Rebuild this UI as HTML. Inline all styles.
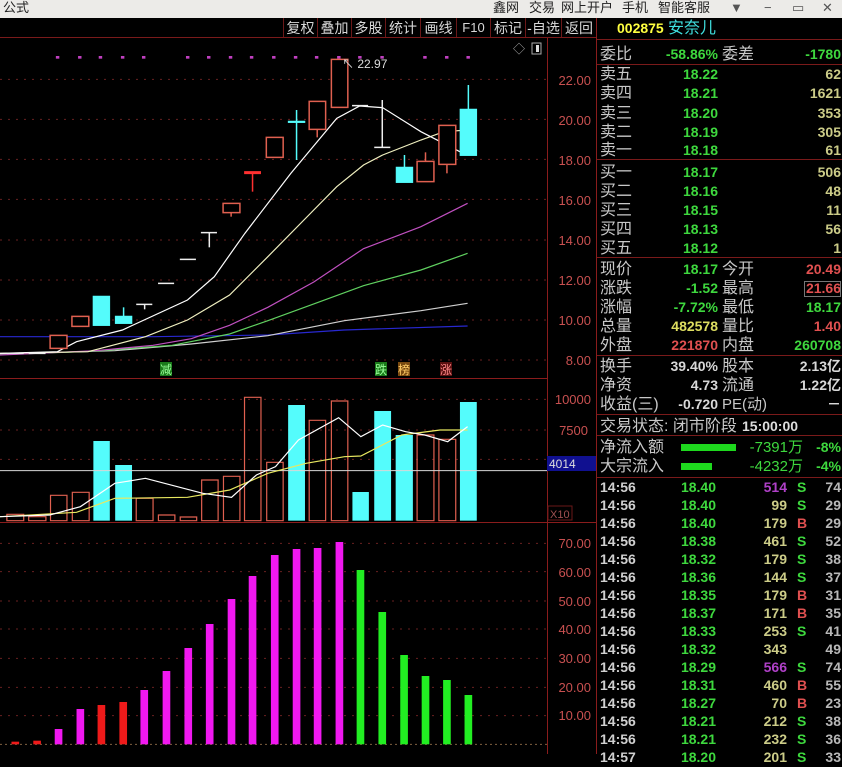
<!DOCTYPE html>
<html><head><meta charset="utf-8">
<style>
*{margin:0;padding:0;box-sizing:border-box}
body{width:842px;height:754px;background:#000;overflow:hidden;position:relative;font-family:"Liberation Sans","Noto Sans CJK SC",sans-serif;}
#title{position:absolute;left:0;top:0;width:842px;height:18px;background:#ecebe8;color:#222;font-size:13px;line-height:16px}
#title span{position:absolute;top:0}
.tb{position:absolute;top:18px;height:20px;line-height:20px;color:#d8d8d8;font-size:14px;text-align:center;border-left:1px solid #6a1818}
#rp{position:absolute;left:596px;top:18px;width:246px;height:736px;border-left:1px solid #8a1c1c}
.r{position:absolute;left:0;width:246px;height:19px;line-height:19px;font-size:14px;white-space:nowrap}
.r span{position:absolute;top:0}
.l1{left:3px;color:#c8c8c8;font-size:16px}
.l2{left:125px;color:#c8c8c8;font-size:16px}
.v1{left:0;width:121px;text-align:right;font-weight:bold}
.v2{left:0;width:244px;text-align:right;font-weight:bold}
.g{color:#3ed83e}.y{color:#cccc88}.rd{color:#e05050}.w{color:#d8d8d8}.yy{color:#dede60}.pu{color:#b040c8}
.sep{position:absolute;left:0;width:246px;height:1px;background:#7a1a1a}
.t{left:3px;color:#d0d0d0;font-weight:bold}
.p{left:0;width:119px;text-align:right;font-weight:bold;color:#3ed83e}
.q{left:0;width:190px;text-align:right;font-weight:bold}
.bs{left:200px;font-weight:bold}
.n{left:0;width:244px;text-align:right;color:#b8b8b8;font-weight:bold}
</style></head><body>
<div id="title">
<span style="left:3px">公式</span>
<span style="left:493px">鑫网</span><span style="left:529px">交易</span><span style="left:561px">网上开户</span><span style="left:622px">手机</span><span style="left:658px">智能客服</span>
<span style="left:730px;font-weight:bold;color:#555">▼</span><span style="left:764px;color:#555">−</span><span style="left:792px;color:#555">▭</span><span style="left:822px;color:#555">✕</span>
</div>
<div class="tb" style="left:283px;width:34px">复权</div>
<div class="tb" style="left:317px;width:34px">叠加</div>
<div class="tb" style="left:351px;width:34px">多股</div>
<div class="tb" style="left:385px;width:35px">统计</div>
<div class="tb" style="left:420px;width:36px">画线</div>
<div class="tb" style="left:456px;width:34px;font-size:13px">F10</div>
<div class="tb" style="left:490px;width:35px">标记</div>
<div class="tb" style="left:525px;width:36px">-自选</div>
<div class="tb" style="left:561px;width:35px">返回</div>

<svg style="position:absolute;left:0;top:0" width="596" height="754">
<line x1="0" y1="37.5" x2="596" y2="37.5" stroke="#7a1a1a"/>
<line x1="547.5" y1="38" x2="547.5" y2="754" stroke="#8a1c1c"/>
<line x1="0" y1="378.5" x2="547" y2="378.5" stroke="#8a1c1c"/>
<line x1="0" y1="522.5" x2="596" y2="522.5" stroke="#8a1c1c"/>
<text x="513" y="53" fill="#aaa" font-size="12">◇</text>
<rect x="532" y="43" width="9" height="11" fill="none" stroke="#aaa"/><rect x="536" y="45" width="3" height="7" fill="#ddd"/>
<g transform="translate(0,40) scale(0.38265,0.33333)">
<g stroke="#6a2020" stroke-dasharray="2,6" vector-effect="non-scaling-stroke">
<line x1="0" y1="118" x2="1430" y2="118" vector-effect="non-scaling-stroke"/><line x1="0" y1="238" x2="1430" y2="238" vector-effect="non-scaling-stroke"/><line x1="0" y1="358" x2="1430" y2="358" vector-effect="non-scaling-stroke"/><line x1="0" y1="478" x2="1430" y2="478" vector-effect="non-scaling-stroke"/><line x1="0" y1="600" x2="1430" y2="600" vector-effect="non-scaling-stroke"/><line x1="0" y1="720" x2="1430" y2="720" vector-effect="non-scaling-stroke"/><line x1="0" y1="840" x2="1430" y2="840" vector-effect="non-scaling-stroke"/><line x1="0" y1="960" x2="1430" y2="960" vector-effect="non-scaling-stroke"/>
</g>
<g fill="#c040c0">
<rect x="146" y="48" width="9" height="8"/><rect x="204" y="48" width="9" height="8"/><rect x="258" y="48" width="9" height="8"/><rect x="316" y="48" width="9" height="8"/><rect x="371" y="48" width="9" height="8"/><rect x="486" y="48" width="9" height="8"/><rect x="541" y="48" width="9" height="8"/><rect x="598" y="48" width="9" height="8"/><rect x="653" y="48" width="9" height="8"/><rect x="711" y="48" width="9" height="8"/><rect x="768" y="48" width="9" height="8"/><rect x="823" y="48" width="9" height="8"/><rect x="881" y="48" width="9" height="8"/><rect x="936" y="48" width="9" height="8"/><rect x="994" y="48" width="9" height="8"/><rect x="1106" y="48" width="9" height="8"/><rect x="1163" y="48" width="9" height="8"/><rect x="1219" y="48" width="9" height="8"/>
</g>
<g fill="none" stroke-width="1.2">
<polyline vector-effect="non-scaling-stroke" stroke="#2828d0" points="0,890 400,890 700,885 900,870 1222,858"/>
<polyline vector-effect="non-scaling-stroke" stroke="#d0d0d0" points="0,942 300,932 500,912 700,887 900,842 1100,812 1222,790"/>
<polyline vector-effect="non-scaling-stroke" stroke="#60d060" points="0,944 240,934 450,916 600,882 700,842 820,792 950,737 1100,690 1222,640"/>
<polyline vector-effect="non-scaling-stroke" stroke="#c050c0" points="0,945 250,932 400,916 500,896 600,856 700,802 820,726 950,626 1100,560 1222,490"/>
<polyline vector-effect="non-scaling-stroke" stroke="#f0f0c0" points="0,940 230,935 380,890 490,840 600,765 700,650 820,510 880,440 950,375 1000,345 1100,300 1160,275 1222,270"/>
<polyline vector-effect="non-scaling-stroke" stroke="#ffffff" points="0,940 150,935 200,905 320,870 490,780 560,710 640,580 760,400 880,235 940,198 1000,203 1100,275 1210,340"/>
</g>
<g stroke="#e06050" fill="#000" stroke-width="1.5">
<rect vector-effect="non-scaling-stroke" x="131" y="886" width="44" height="39"/>
<rect vector-effect="non-scaling-stroke" x="188" y="829" width="44" height="30"/>
<line vector-effect="non-scaling-stroke" x1="604" y1="518" x2="604" y2="530"/><rect vector-effect="non-scaling-stroke" x="583" y="490" width="44" height="28"/>
<rect vector-effect="non-scaling-stroke" x="696" y="292" width="44" height="60"/>
<line vector-effect="non-scaling-stroke" x1="829" y1="268" x2="829" y2="292"/><rect vector-effect="non-scaling-stroke" x="808" y="184" width="43" height="84"/>
<rect vector-effect="non-scaling-stroke" x="866" y="58" width="43" height="144"/>
<line vector-effect="non-scaling-stroke" x1="1112" y1="337" x2="1112" y2="364"/><rect vector-effect="non-scaling-stroke" x="1090" y="364" width="44" height="61"/>
<line vector-effect="non-scaling-stroke" x1="1168" y1="373" x2="1168" y2="400"/><rect vector-effect="non-scaling-stroke" x="1147" y="256" width="44" height="117"/>
</g>
<g stroke="#ff3030" stroke-width="1.5"><line vector-effect="non-scaling-stroke" x1="638" y1="398" x2="682" y2="398" stroke-width="3"/><line vector-effect="non-scaling-stroke" x1="660" y1="398" x2="660" y2="455"/></g>
<g stroke="#eeeeee" stroke-width="1.5">
<line vector-effect="non-scaling-stroke" x1="18" y1="940" x2="62" y2="940"/><line vector-effect="non-scaling-stroke" x1="75" y1="940" x2="119" y2="940"/>
<line vector-effect="non-scaling-stroke" x1="356" y1="793" x2="398" y2="793"/><line vector-effect="non-scaling-stroke" x1="378" y1="793" x2="378" y2="808"/>
<line vector-effect="non-scaling-stroke" x1="413" y1="730" x2="455" y2="730"/>
<line vector-effect="non-scaling-stroke" x1="470" y1="658" x2="512" y2="658"/>
<line vector-effect="non-scaling-stroke" x1="525" y1="578" x2="567" y2="578"/><line vector-effect="non-scaling-stroke" x1="547" y1="578" x2="547" y2="622"/>
<line vector-effect="non-scaling-stroke" x1="920" y1="197" x2="962" y2="197"/>
<line vector-effect="non-scaling-stroke" x1="999" y1="180" x2="999" y2="322"/><line vector-effect="non-scaling-stroke" x1="978" y1="322" x2="1020" y2="322"/>
</g>
<g fill="#54fcfc" stroke="#54fcfc" stroke-width="1.5">
<rect x="243" y="768" width="44" height="89"/>
<line vector-effect="non-scaling-stroke" x1="323" y1="802" x2="323" y2="828"/><rect x="301" y="828" width="44" height="23"/>
<line vector-effect="non-scaling-stroke" x1="775" y1="210" x2="775" y2="360"/><rect x="753" y="243" width="44" height="5"/>
<line vector-effect="non-scaling-stroke" x1="1057" y1="345" x2="1057" y2="381"/><rect x="1035" y="381" width="44" height="47"/>
<line vector-effect="non-scaling-stroke" x1="1224" y1="135" x2="1224" y2="207"/><rect x="1202" y="207" width="44" height="140"/>
</g>
</g>
<g fill="#c85050" font-size="13" text-anchor="end">
<text x="591" y="85">22.00</text><text x="591" y="125">20.00</text><text x="591" y="165">18.00</text><text x="591" y="205">16.00</text><text x="591" y="245">14.00</text><text x="591" y="285">12.00</text><text x="591" y="325">10.00</text><text x="591" y="365">8.00</text>
</g>
<text x="342" y="68" fill="#ddd" font-size="12">↖ 22.97</text>
<rect x="160" y="362" width="12" height="14" fill="#1a7a1a"/><text x="160" y="374" fill="#9f9" font-size="12">减</text>
<rect x="375" y="362" width="12" height="14" fill="#1a7a1a"/><text x="375" y="374" fill="#9f9" font-size="12">跌</text>
<rect x="398" y="362" width="12" height="14" fill="#7a4a10"/><text x="398" y="374" fill="#fc6" font-size="12">榜</text>
<rect x="440" y="362" width="12" height="14" fill="#5a1010"/><text x="440" y="374" fill="#f88" font-size="12">涨</text>

<g transform="translate(0,380) scale(0.38265,0.33333)">
<g stroke="#6a2020" stroke-dasharray="2,6"><line vector-effect="non-scaling-stroke" x1="0" y1="58" x2="1430" y2="58"/><line vector-effect="non-scaling-stroke" x1="0" y1="150" x2="1430" y2="150"/><line vector-effect="non-scaling-stroke" x1="0" y1="238" x2="1430" y2="238"/></g>
<g fill="none" stroke="#e06050" stroke-width="1.2">
<rect vector-effect="non-scaling-stroke" x="18" y="403" width="44" height="19"/><rect vector-effect="non-scaling-stroke" x="75" y="410" width="45" height="12"/><rect vector-effect="non-scaling-stroke" x="132" y="346" width="43" height="76"/><rect vector-effect="non-scaling-stroke" x="189" y="337" width="44" height="85"/><rect vector-effect="non-scaling-stroke" x="356" y="355" width="44" height="67"/><rect vector-effect="non-scaling-stroke" x="414" y="405" width="43" height="17"/><rect vector-effect="non-scaling-stroke" x="471" y="411" width="43" height="11"/><rect vector-effect="non-scaling-stroke" x="527" y="300" width="43" height="122"/><rect vector-effect="non-scaling-stroke" x="584" y="289" width="43" height="133"/><rect vector-effect="non-scaling-stroke" x="639" y="52" width="43" height="370"/><rect vector-effect="non-scaling-stroke" x="697" y="247" width="43" height="175"/><rect vector-effect="non-scaling-stroke" x="808" y="121" width="43" height="301"/><rect vector-effect="non-scaling-stroke" x="866" y="63" width="43" height="359"/><rect vector-effect="non-scaling-stroke" x="1090" y="165" width="44" height="257"/><rect vector-effect="non-scaling-stroke" x="1147" y="178" width="44" height="244"/>
</g>
<g fill="#54fcfc"><rect x="244" y="183" width="43" height="239"/><rect x="301" y="255" width="44" height="167"/><rect x="753" y="75" width="44" height="347"/><rect x="921" y="336" width="43" height="86"/><rect x="978" y="93" width="44" height="329"/><rect x="1034" y="165" width="45" height="257"/><rect x="1202" y="66" width="44" height="356"/></g>
<line vector-effect="non-scaling-stroke" x1="0" y1="272" x2="1430" y2="272" stroke="#d8d8d8"/>
<g fill="none" stroke-width="1.2">
<polyline vector-effect="non-scaling-stroke" stroke="#e8e860" points="0,410 200,397 300,355 490,352 600,330 700,280 800,250 900,230 943,228 1050,165 1150,150 1222,150"/>
<polyline vector-effect="non-scaling-stroke" stroke="#fff" points="0,410 130,405 210,380 300,310 380,295 530,340 605,352 670,285 720,260 780,180 885,113 943,170 1000,135 1060,155 1110,165 1170,185 1222,140"/>
</g>
</g>
<rect x="547" y="456" width="49" height="15" fill="#101090"/>
<text x="549" y="468" fill="#ddd" font-size="12">4014</text>
<g fill="#c85050" font-size="13" text-anchor="end"><text x="591" y="404">10000</text><text x="588" y="435">7500</text></g>
<rect x="548" y="506" width="24" height="14" fill="none" stroke="#6a1818"/>
<text x="550" y="518" fill="#a05050" font-size="11">X10</text>

<g transform="translate(0,525) scale(0.38265,0.33333)">
<g stroke="#6a2020" stroke-dasharray="2,6"><line vector-effect="non-scaling-stroke" x1="0" y1="55" x2="1430" y2="55"/><line vector-effect="non-scaling-stroke" x1="0" y1="140" x2="1430" y2="140"/><line vector-effect="non-scaling-stroke" x1="0" y1="228" x2="1430" y2="228"/><line vector-effect="non-scaling-stroke" x1="0" y1="312" x2="1430" y2="312"/><line vector-effect="non-scaling-stroke" x1="0" y1="400" x2="1430" y2="400"/><line vector-effect="non-scaling-stroke" x1="0" y1="487" x2="1430" y2="487"/><line vector-effect="non-scaling-stroke" x1="0" y1="572" x2="1430" y2="572"/></g>
<line vector-effect="non-scaling-stroke" x1="0" y1="658" x2="1430" y2="658" stroke="#806040" stroke-dasharray="2,3"/>
<g fill="#ee1a1a"><rect x="30" y="650" width="20" height="8"/><rect x="87" y="647" width="20" height="11"/><rect x="255" y="540" width="20" height="118"/><rect x="312" y="531" width="20" height="127"/></g>
<g fill="#f018f0"><rect x="143" y="612" width="20" height="46"/><rect x="200" y="552" width="20" height="106"/><rect x="367" y="495" width="20" height="163"/><rect x="425" y="438" width="20" height="220"/><rect x="482" y="369" width="20" height="289"/><rect x="538" y="297" width="20" height="361"/><rect x="595" y="222" width="20" height="436"/><rect x="650" y="153" width="20" height="505"/><rect x="708" y="90" width="20" height="568"/><rect x="765" y="72" width="20" height="586"/><rect x="820" y="69" width="20" height="589"/><rect x="877" y="51" width="20" height="607"/></g>
<g fill="#22ee22"><rect x="932" y="135" width="20" height="523"/><rect x="989" y="261" width="20" height="397"/><rect x="1046" y="390" width="20" height="268"/><rect x="1102" y="453" width="20" height="205"/><rect x="1158" y="465" width="20" height="193"/><rect x="1214" y="510" width="20" height="148"/></g>
</g>
<g fill="#c85050" font-size="13" text-anchor="end"><text x="591" y="548">70.00</text><text x="591" y="577">60.00</text><text x="591" y="606">50.00</text><text x="591" y="634">40.00</text><text x="591" y="663">30.00</text><text x="591" y="692">20.00</text><text x="591" y="720">10.00</text></g>
</svg>

<div id="rp">
<div class="r" style="top:1px"><span style="left:20px;color:#ffff40;font-weight:bold;font-size:14px">002875</span><span style="left:71px;color:#40e0e0;font-size:16px">安奈儿</span></div>
<div class="sep" style="top:21px"></div>
<div class="r" style="top:27px"><span class="l1">委比</span><span class="v1 g">-58.86%</span><span class="l2">委差</span><span class="v2 g">-1780</span></div>
<div class="sep" style="top:46px"></div>
<div class="r" style="top:47px"><span class="l1">卖五</span><span class="v1 g">18.22</span><span class="v2 y">62</span></div>
<div class="r" style="top:66px"><span class="l1">卖四</span><span class="v1 g">18.21</span><span class="v2 y">1621</span></div>
<div class="r" style="top:86px"><span class="l1">卖三</span><span class="v1 g">18.20</span><span class="v2 y">353</span></div>
<div class="r" style="top:105px"><span class="l1">卖二</span><span class="v1 g">18.19</span><span class="v2 y">305</span></div>
<div class="r" style="top:123px"><span class="l1">卖一</span><span class="v1 g">18.18</span><span class="v2 y">61</span></div>
<div class="sep" style="top:141px"></div>
<div class="r" style="top:145px"><span class="l1">买一</span><span class="v1 g">18.17</span><span class="v2 y">506</span></div>
<div class="r" style="top:164px"><span class="l1">买二</span><span class="v1 g">18.16</span><span class="v2 y">48</span></div>
<div class="r" style="top:183px"><span class="l1">买三</span><span class="v1 g">18.15</span><span class="v2 y">11</span></div>
<div class="r" style="top:202px"><span class="l1">买四</span><span class="v1 g">18.13</span><span class="v2 y">56</span></div>
<div class="r" style="top:221px"><span class="l1">买五</span><span class="v1 g">18.12</span><span class="v2 y">1</span></div>
<div class="sep" style="top:239px"></div>
<div class="r" style="top:242px"><span class="l1">现价</span><span class="v1 g">18.17</span><span class="l2">今开</span><span class="v2 rd">20.49</span></div>
<div class="r" style="top:261px"><span class="l1">涨跌</span><span class="v1 g">-1.52</span><span class="l2">最高</span><span class="v2 rd">21.66</span></div>
<div style="position:absolute;left:207px;top:263px;width:37px;height:16px;border:1px solid #777"></div>
<div class="r" style="top:280px"><span class="l1">涨幅</span><span class="v1 g">-7.72%</span><span class="l2">最低</span><span class="v2 g">18.17</span></div>
<div class="r" style="top:299px"><span class="l1">总量</span><span class="v1 yy">482578</span><span class="l2">量比</span><span class="v2 rd">1.40</span></div>
<div class="r" style="top:318px"><span class="l1">外盘</span><span class="v1 rd">221870</span><span class="l2">内盘</span><span class="v2 g">260708</span></div>
<div class="sep" style="top:337px"></div>
<div class="r" style="top:339px"><span class="l1">换手</span><span class="v1 w">39.40%</span><span class="l2">股本</span><span class="v2 w">2.13亿</span></div>
<div class="r" style="top:358px"><span class="l1">净资</span><span class="v1 w">4.73</span><span class="l2">流通</span><span class="v2 w">1.22亿</span></div>
<div class="r" style="top:377px"><span class="l1">收益(三)</span><span class="v1 w">-0.720</span><span class="l2" style="font-size:15px">PE(动)</span><span class="v2 w">－</span></div>
<div class="sep" style="top:396px"></div>
<div class="r" style="top:399px"><span class="l1">交易状态: 闭市阶段</span><span style="left:145px;color:#ddd;font-weight:bold">15:00:00</span></div>
<div class="sep" style="top:417px"></div>
<div class="r" style="top:420px"><span class="l1">净流入额</span><span style="left:84px;top:6px;width:55px;height:7px;background:#1ed81e"></span><span style="left:0;width:206px;text-align:right;color:#3ed83e;font-size:15px">-7391万</span><span class="v2 g">-8%</span></div>
<div class="r" style="top:439px"><span class="l1">大宗流入</span><span style="left:84px;top:6px;width:31px;height:7px;background:#1ed81e"></span><span style="left:0;width:206px;text-align:right;color:#3ed83e;font-size:15px">-4232万</span><span class="v2 g">-4%</span></div>
<div class="sep" style="top:459px"></div>
<div class="r" style="top:460px"><span class="t">14:56</span><span class="p">18.40</span><span class="q pu">514</span><span class="bs g">S</span><span class="n">74</span></div>
<div class="r" style="top:478px"><span class="t">14:56</span><span class="p">18.40</span><span class="q y">99</span><span class="bs g">S</span><span class="n">29</span></div>
<div class="r" style="top:496px"><span class="t">14:56</span><span class="p">18.40</span><span class="q y">179</span><span class="bs rd">B</span><span class="n">29</span></div>
<div class="r" style="top:514px"><span class="t">14:56</span><span class="p">18.38</span><span class="q y">461</span><span class="bs g">S</span><span class="n">52</span></div>
<div class="r" style="top:532px"><span class="t">14:56</span><span class="p">18.32</span><span class="q y">179</span><span class="bs g">S</span><span class="n">38</span></div>
<div class="r" style="top:550px"><span class="t">14:56</span><span class="p">18.36</span><span class="q y">144</span><span class="bs g">S</span><span class="n">37</span></div>
<div class="r" style="top:568px"><span class="t">14:56</span><span class="p">18.35</span><span class="q y">179</span><span class="bs rd">B</span><span class="n">31</span></div>
<div class="r" style="top:586px"><span class="t">14:56</span><span class="p">18.37</span><span class="q y">171</span><span class="bs rd">B</span><span class="n">35</span></div>
<div class="r" style="top:604px"><span class="t">14:56</span><span class="p">18.33</span><span class="q y">253</span><span class="bs g">S</span><span class="n">41</span></div>
<div class="r" style="top:622px"><span class="t">14:56</span><span class="p">18.32</span><span class="q y">343</span><span class="n">49</span></div>
<div class="r" style="top:640px"><span class="t">14:56</span><span class="p">18.29</span><span class="q pu">566</span><span class="bs g">S</span><span class="n">74</span></div>
<div class="r" style="top:658px"><span class="t">14:56</span><span class="p">18.31</span><span class="q y">460</span><span class="bs rd">B</span><span class="n">55</span></div>
<div class="r" style="top:676px"><span class="t">14:56</span><span class="p">18.27</span><span class="q y">70</span><span class="bs rd">B</span><span class="n">23</span></div>
<div class="r" style="top:694px"><span class="t">14:56</span><span class="p">18.21</span><span class="q y">212</span><span class="bs g">S</span><span class="n">38</span></div>
<div class="r" style="top:712px"><span class="t">14:56</span><span class="p">18.21</span><span class="q y">232</span><span class="bs g">S</span><span class="n">36</span></div>
<div class="r" style="top:730px"><span class="t">14:57</span><span class="p">18.20</span><span class="q y">201</span><span class="bs g">S</span><span class="n">33</span></div>
</div>
</body></html>
